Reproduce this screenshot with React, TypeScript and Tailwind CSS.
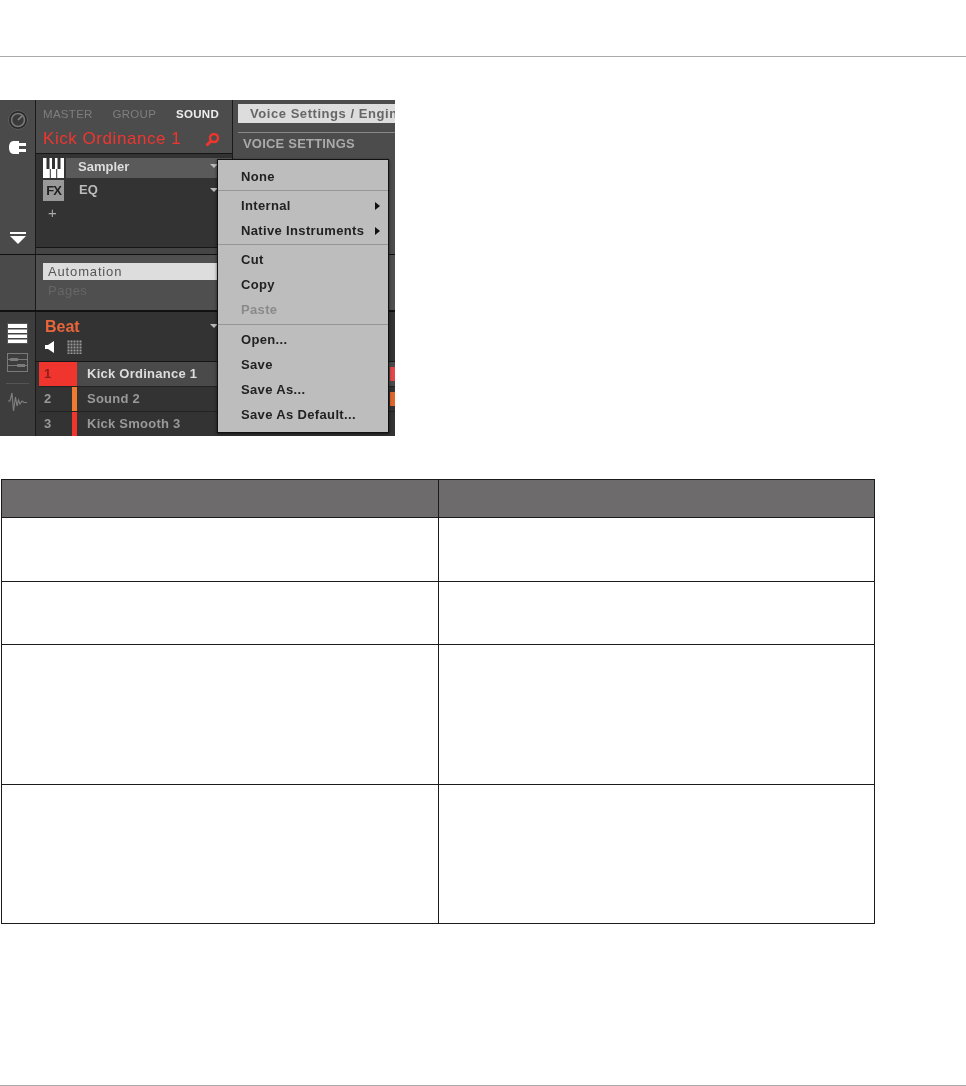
const sans = { fontFamily: '"Liberation Sans", Arial, sans-serif' };

const menuSections = [
    [{ label: 'None' }],
    [{ label: 'Internal', arrow: true }, { label: 'Native Instruments', arrow: true }],
    [{ label: 'Cut' }, { label: 'Copy' }, { label: 'Paste', disabled: true }],
    [{ label: 'Open...' }, { label: 'Save' }, { label: 'Save As...' }, { label: 'Save As Default...' }],
];

const sectionClasses = ['pt-[4px] pb-[1px] border-b border-[#969696]', 'pt-[2px] pb-[1px] border-b border-[#969696]', 'pt-[2px] pb-[2px] border-b border-[#969696]', 'pt-[2px]'];

const tableRows = [64, 63, 140, 139];

function KnobIcon() {
    return (
        <svg width="20" height="20" viewBox="0 0 20 20">
            <circle cx="10" cy="10" r="9.5" fill="#2a2a2a" stroke="#5f5f5f" strokeWidth="1" />
            <circle cx="10" cy="10" r="6.5" fill="#3a3a3a" stroke="#787878" strokeWidth="1.6" />
            <path d="M10 10 L14 6" stroke="#8a8a8a" strokeWidth="1.4" />
        </svg>
    );
}

function PlugIcon() {
    return (
        <svg width="18" height="15" viewBox="0 0 18 15">
            <path d="M0 7.5 C0 3 2 1 5 1 H10 V14 H5 C2 14 0 12 0 7.5 Z" fill="#fff" />
            <rect x="10" y="3" width="7" height="3" fill="#fff" />
            <rect x="10" y="9" width="7" height="3" fill="#fff" />
        </svg>
    );
}

function DropIcon() {
    return (
        <svg width="16" height="12" viewBox="0 0 16 12">
            <rect x="0" y="0" width="16" height="2" fill="#fff" />
            <path d="M0 4 H16 L8 12 Z" fill="#fff" />
        </svg>
    );
}

function PianoIcon() {
    return (
        <svg width="21" height="20" viewBox="0 0 21 20">
            <rect width="21" height="20" fill="#fff" />
            <rect x="3.5" y="0" width="3" height="11" fill="#333" />
            <rect x="9" y="0" width="3" height="11" fill="#333" />
            <rect x="14.5" y="0" width="3" height="11" fill="#333" />
            <rect x="6.8" y="11" width="1" height="9" fill="#333" />
            <rect x="13.2" y="11" width="1" height="9" fill="#333" />
        </svg>
    );
}

function SearchIcon() {
    return (
        <svg width="15" height="15" viewBox="0 0 15 15">
            <circle cx="9" cy="6" r="4" fill="none" stroke="#f0352f" strokeWidth="2.4" />
            <path d="M6 9 L1.5 13.5" stroke="#f0352f" strokeWidth="2.8" />
        </svg>
    );
}

function ListIcon() {
    return (
        <svg width="21" height="21" viewBox="0 0 21 21">
            <rect x="0.5" y="0.5" width="20" height="20" fill="#fff" stroke="#555" />
            <rect x="1" y="5" width="19" height="1.5" fill="#444" />
            <rect x="1" y="10" width="19" height="1.5" fill="#444" />
            <rect x="1" y="15" width="19" height="1.5" fill="#444" />
        </svg>
    );
}

function MixerIcon() {
    return (
        <svg width="21" height="19" viewBox="0 0 21 19">
            <rect x="0.5" y="0.5" width="20" height="18" fill="none" stroke="#7a7a7a" />
            <path d="M1 6.5 H20 M1 12.5 H20" stroke="#7a7a7a" />
            <rect x="3" y="5" width="8" height="3" fill="#7a7a7a" />
            <rect x="10" y="11" width="8" height="3" fill="#7a7a7a" />
        </svg>
    );
}

function WaveIcon() {
    return (
        <svg width="19" height="20" viewBox="0 0 19 20">
            <path d="M0 9 H2 L4 1 L5.5 19 L7.5 5 L9 14 L10.5 8 L12 12 L14 9 L16 10.5 H19" fill="none" stroke="#808080" strokeWidth="1.1" />
        </svg>
    );
}

function SpeakerIcon() {
    return (
        <svg width="10" height="12" viewBox="0 0 10 12">
            <path d="M0 4 H3 L9 0 V12 L3 8 H0 Z" fill="#fff" />
        </svg>
    );
}

function GridIcon() {
    return (
        <svg width="15" height="14" viewBox="0 0 15 14">
            {[0, 1, 2, 3, 4].map((y) =>
                [0, 1, 2, 3, 4].map((x) => (
                    <rect key={`${x}-${y}`} x={x * 3 + 0.5} y={y * 3 + 0.5} width="2" height="2" fill="#9a9a9a" />
                ))
            )}
        </svg>
    );
}

function SoftwareShot() {
    return (
        <div className="relative w-[395px] h-[336px] overflow-hidden bg-[#333] text-[13px] blur-[0.4px]" style={sans}>
            {/* plugin panel */}
            <div className="flex h-[155px] border-b border-[#111]">
                <div className="w-[36px] shrink-0 bg-[#4a4a4a] border-r border-[#1a1a1a] flex flex-col items-center pt-[10px]">
                    <KnobIcon />
                    <div className="mt-[10px] pl-[1px]"><PlugIcon /></div>
                    <div className="mt-auto mb-[10px]"><DropIcon /></div>
                </div>
                <div className="w-[197px] shrink-0 flex flex-col border-r border-[#1a1a1a]">
                    <div className="h-[54px] bg-[#4c4c4c] px-[7px] pt-[7px] border-b border-[#161616]">
                        <div className="flex justify-between text-[11.5px] leading-[14px] tracking-[0.3px] pr-[6px]">
                            <span className="text-[#7f7f7f]">MASTER</span>
                            <span className="text-[#7f7f7f]">GROUP</span>
                            <span className="text-[#eee] font-bold">SOUND</span>
                        </div>
                        <div className="flex items-center justify-between mt-[8px] pr-[5px]">
                            <span className="text-[#f0352f] text-[17px] leading-[20px] tracking-[0.55px]">Kick Ordinance 1</span>
                            <SearchIcon />
                        </div>
                    </div>
                    <div className="flex-1 bg-[#333] pt-[3px] border-b border-[#161616]">
                        <div className="flex items-center h-[21px] pl-[7px]">
                            <PianoIcon />
                            <div className="flex-1 h-[20px] ml-[2px] bg-[#5a5a5a] pl-[12px] leading-[18px] font-bold text-[#ddd]">Sampler</div>
                        </div>
                        <div className="flex items-center h-[23px] pl-[7px] pt-[1px]">
                            <div className="w-[21px] h-[21px] bg-[#999] text-[#222] font-bold text-[13px] leading-[21px] tracking-[-1px] text-center">FX</div>
                            <div className="ml-[15px] font-bold text-[#bbb]">EQ</div>
                        </div>
                        <div className="pl-[12px] pt-[1px] text-[#aaa] text-[15px] leading-[22px]">+</div>
                    </div>
                    <div className="h-[6px] bg-[#454545]" />
                </div>
                <div className="flex-1 bg-[#4c4c4c] pl-[5px] pt-[4px]">
                    <div className="h-[19px] bg-[#ddd] text-[#666] font-bold pl-[12px] leading-[20px] tracking-[0.55px] whitespace-nowrap overflow-hidden">Voice Settings / Engine</div>
                    <div className="h-px bg-[#888] mt-[9px]" />
                    <div className="mt-[4px] pl-[5px] font-bold text-[#aaa] leading-[14px] tracking-[0.2px]">VOICE SETTINGS</div>
                </div>
            </div>

            {/* automation panel */}
            <div className="flex h-[57px] border-b-[2px] border-[#111] bg-[#4f4f4f]">
                <div className="w-[36px] shrink-0 bg-[#4a4a4a] border-r border-[#1a1a1a]" />
                <div className="flex-1 pl-[7px] pt-[8px]">
                    <div className="w-[174px] h-[17px] bg-[#ddd] text-[#555] pl-[5px] leading-[17px] tracking-[0.85px]">Automation</div>
                    <div className="pl-[5px] mt-[3px] text-[#666] leading-[15px] tracking-[0.5px]">Pages</div>
                </div>
            </div>

            {/* group panel */}
            <div className="flex h-[124px]">
                <div className="w-[36px] shrink-0 bg-[#3d3d3d] border-r border-[#1a1a1a] flex flex-col items-center pt-[11px]">
                    <ListIcon />
                    <div className="mt-[9px]"><MixerIcon /></div>
                    <div className="w-[23px] h-px bg-[#555] mt-[11px]" />
                    <div className="mt-[8px]"><WaveIcon /></div>
                </div>
                <div className="flex-1 flex flex-col">
                    <div className="h-[50px] shrink-0 pl-[9px] pt-[5px] border-b border-[#161616]">
                        <div className="text-[#e8663a] text-[16px] font-bold leading-[20px]">Beat</div>
                        <div className="flex items-center gap-[12px] mt-[3px]">
                            <SpeakerIcon />
                            <GridIcon />
                        </div>
                    </div>
                    <div className="flex h-[25px] shrink-0 border-b border-[#222] ml-[3px] font-bold leading-[24px] tracking-[0.25px]">
                        <div className="w-[38px] bg-[#f0352f] text-[#8c1f1c] pl-[5px]">1</div>
                        <div className="flex-1 bg-[#4a4a4a] text-[#ddd] pl-[10px]">Kick Ordinance 1</div>
                    </div>
                    <div className="flex h-[25px] shrink-0 border-b border-[#222] ml-[3px] font-bold leading-[24px] tracking-[0.25px] text-[#999]">
                        <div className="w-[33px] pl-[5px]">2</div>
                        <div className="w-[5px] bg-[#ef7a30]" />
                        <div className="pl-[10px]">Sound 2</div>
                    </div>
                    <div className="flex flex-1 ml-[3px] font-bold leading-[24px] tracking-[0.25px] text-[#999]">
                        <div className="w-[33px] pl-[5px]">3</div>
                        <div className="w-[5px] bg-[#f0352f]" />
                        <div className="pl-[10px]">Kick Smooth 3</div>
                    </div>
                </div>
            </div>

            {/* menu and the bits peeking out around it */}
            <div className="absolute left-[390px] top-[267px] w-[5px] h-[14px] bg-[#e2474a]" />
            <div className="absolute left-[390px] top-[292px] w-[5px] h-[14px] bg-[#e0672c]" />
            <div className="absolute left-[210px] top-[64px] w-0 h-0 border-x-[4px] border-x-transparent border-t-[4px] border-t-[#bbb]" />
            <div className="absolute left-[210px] top-[88px] w-0 h-0 border-x-[4px] border-x-transparent border-t-[4px] border-t-[#bbb]" />
            <div className="absolute left-[210px] top-[224px] w-0 h-0 border-x-[4px] border-x-transparent border-t-[4px] border-t-[#bbb]" />
            <div className="absolute left-[217px] top-[59px] w-[172px] h-[274px] bg-[#bdbdbd] border border-[#111] shadow-[0_1px_3px_rgba(0,0,0,0.6)]">
                {menuSections.map((section, i) => (
                    <div key={i} className={sectionClasses[i]}>
                        {section.map((item) => (
                            <div key={item.label} className={`flex items-center justify-between h-[25px] pl-[23px] pr-[8px] font-bold text-[13px] tracking-[0.35px] ${item.disabled ? 'text-[#8a8a8a]' : 'text-[#222]'}`}>
                                <span>{item.label}</span>
                                {item.arrow && <span className="w-0 h-0 border-y-[4px] border-y-transparent border-l-[5px] border-l-[#111]" />}
                            </div>
                        ))}
                    </div>
                ))}
            </div>
        </div>
    );
}

export default function App() {
    return (
        <div className="relative w-[966px] h-[1086px] bg-white flex flex-col overflow-hidden">
            <div className="h-px bg-[#aaaaaa] mt-[56px]" />
            <div className="mt-[43px]">
                <SoftwareShot />
            </div>

            <div className="mt-[43px] ml-[1px] w-[874px] border border-[#1d1a1b]">
                <div className="flex h-[37px] bg-[#6d6b6c]">
                    <div className="w-[437px] border-r border-[#1d1a1b]" />
                </div>
                {tableRows.map((height, i) => (
                    <div key={i} className="flex border-t border-[#1d1a1b]" style={{ height }}>
                        <div className="w-[437px] border-r border-[#1d1a1b]" />
                    </div>
                ))}
            </div>

            <div className="h-px bg-[#aaaaaa] mt-auto" />
        </div>
    );
}
